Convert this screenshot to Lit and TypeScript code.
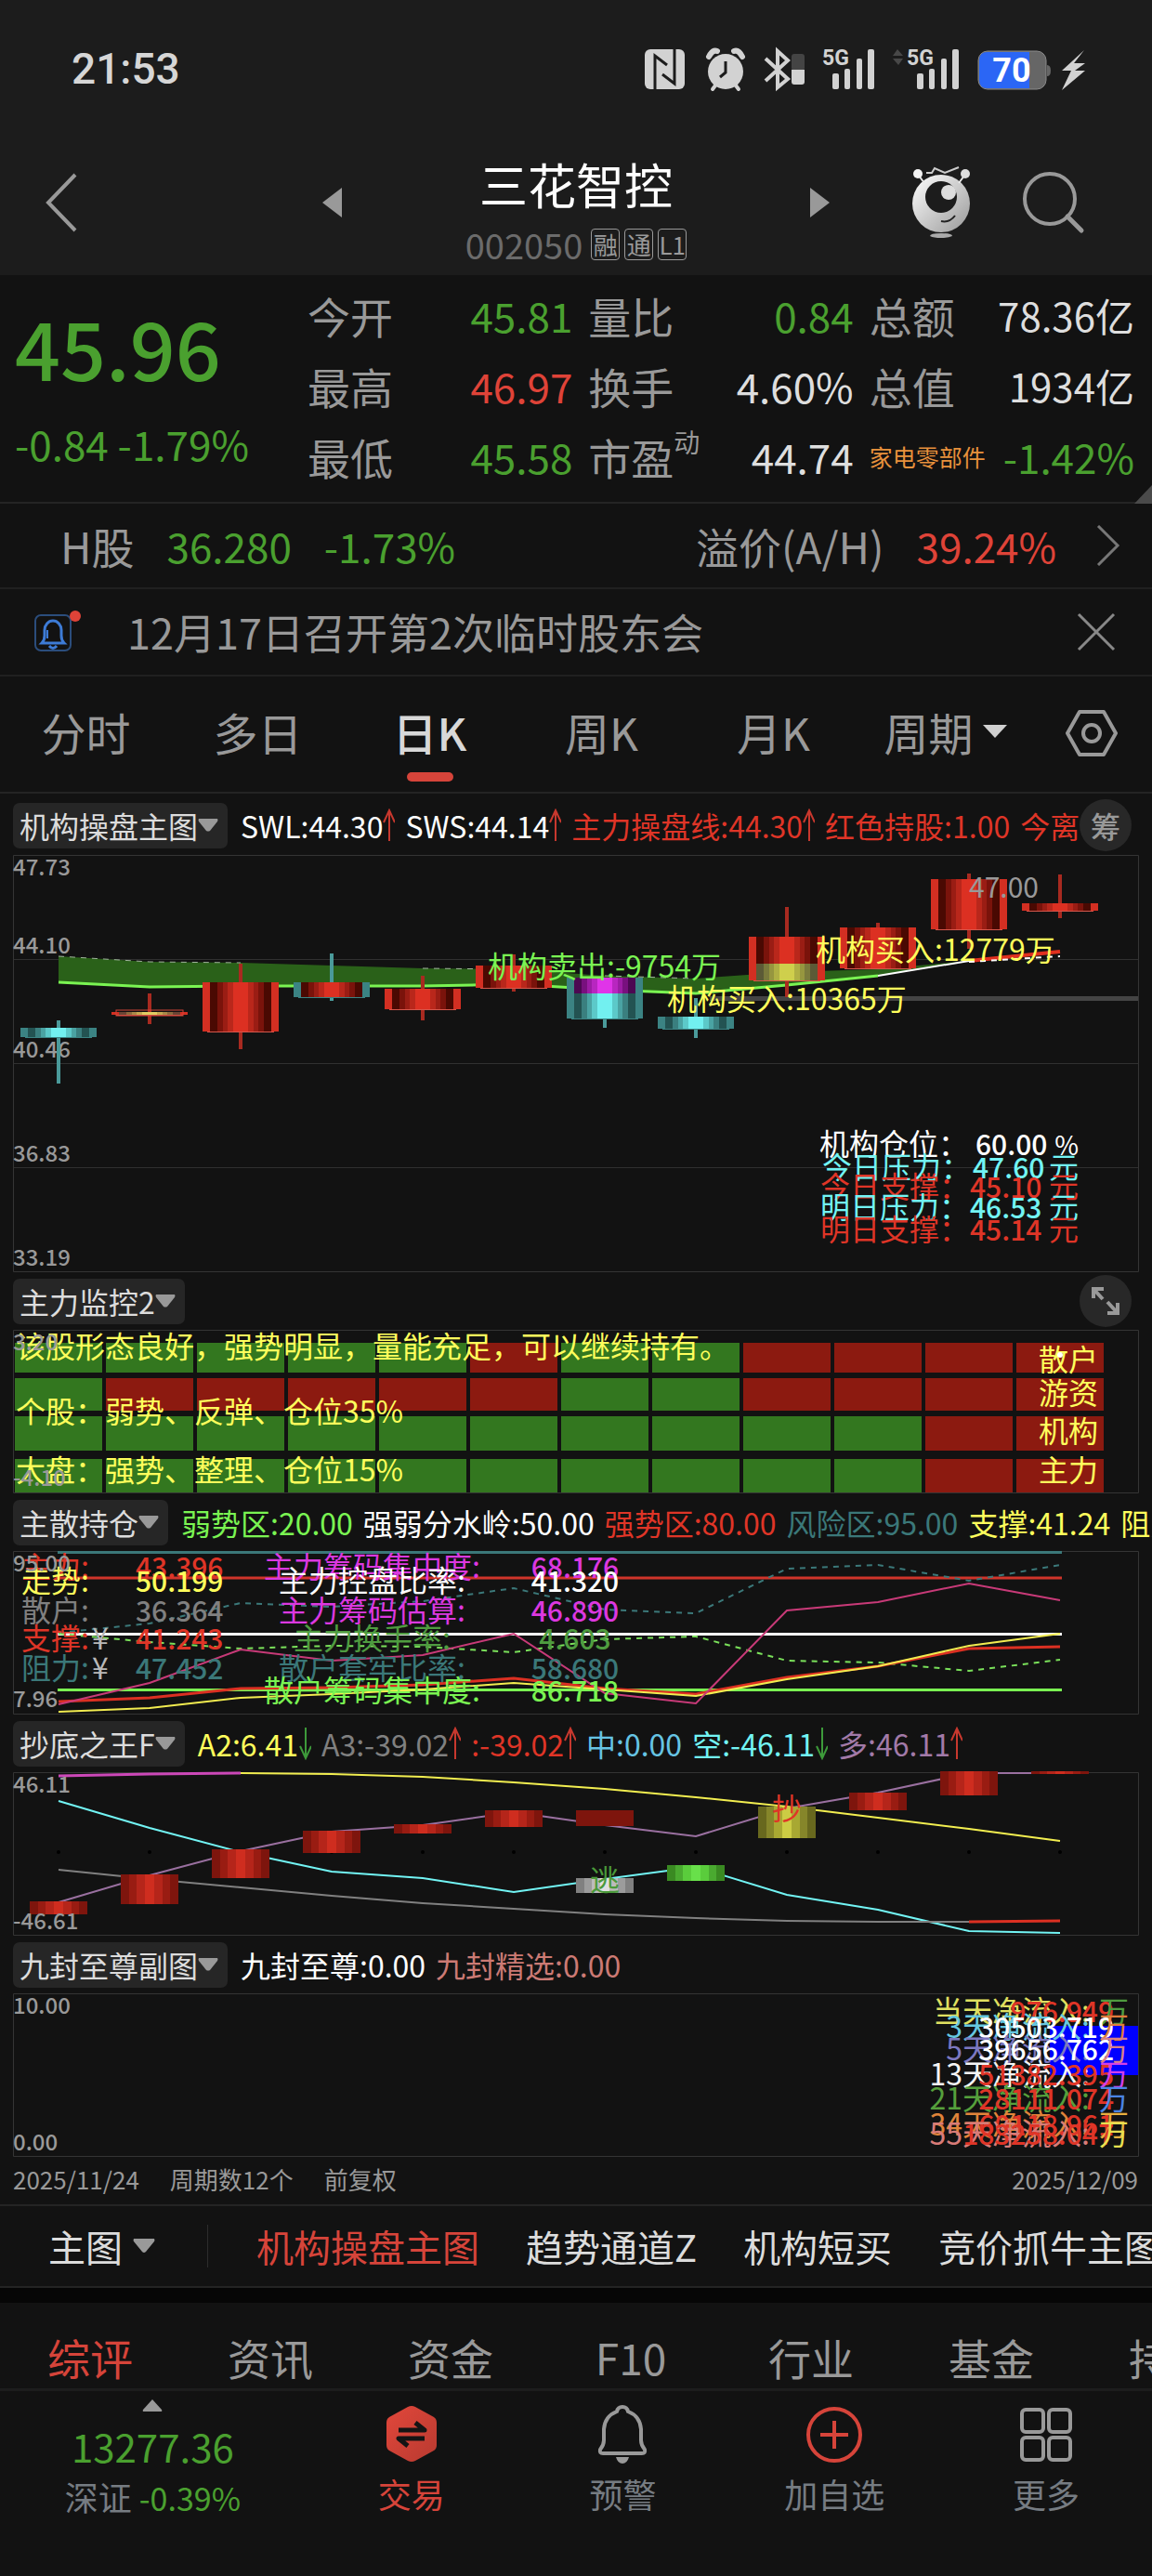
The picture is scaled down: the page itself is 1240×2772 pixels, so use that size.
import { LitElement, html, svg, css, nothing } from "lit";
import { customElement, property } from "lit/decorators.js";
import { classMap } from "lit/directives/class-map.js";

const base = css`
  :host { display: block; }
  * { box-sizing: border-box; }
  button, a {
    font: inherit; color: inherit; background: none; border: 0;
    padding: 0; margin: 0; text-decoration: none; cursor: pointer;
  }
  svg { display: block; flex: none; }
  .up { color: #df4338; }
  .down { color: #4aa02f; }
  .plain { color: #dedede; }
`;

/* ---------- status bar ---------- */

const signal = (x: number) => svg`
  <text x=${x} y="29" font-size="23" font-weight="700" fill="#d2d2d2">5G</text>
  <g fill="#d2d2d2">
    <rect x=${x + 11} y="38" width="7" height="17" rx="2"/>
    <rect x=${x + 24} y="33" width="6" height="22" rx="2"/>
    <rect x=${x + 37} y="22" width="6" height="33" rx="2"/>
    <rect x=${x + 49} y="12" width="7" height="43" rx="2"/>
  </g>`;

@customElement("status-bar")
export class StatusBar extends LitElement {
  static styles = [base, css`
    .bar { display: flex; justify-content: space-between; align-items: flex-start; height: 150px; padding: 41px 68px 0 77px; }
    .time { font: 500 46px/66px Roboto, sans-serif; color: #d6d6d6; }
    .icons { font-family: Roboto, sans-serif; }
  `];
  render() {
    return html`<div class="bar">
      <span class="time">21:53</span>
      <svg class="icons" width="480" height="64" viewBox="0 0 480 64" aria-label="状态">
        <rect x="2" y="12" width="43" height="43" rx="6" fill="#d2d2d2"/>
        <path d="M13 55V19L26 29M34 12v37L21 39" fill="none" stroke="#1c1c1c" stroke-width="3"/>
        <circle cx="89" cy="36" r="19" fill="#d2d2d2"/>
        <path d="M71 20q4-8 9-6M107 20q-4-8-9-6" fill="none" stroke="#d2d2d2" stroke-width="6" stroke-linecap="round"/>
        <path d="M78 51l-3 4M100 51l3 4" stroke="#d2d2d2" stroke-width="4" stroke-linecap="round"/>
        <path d="M89 25v12l-6 5" fill="none" stroke="#1c1c1c" stroke-width="3"/>
        <path d="M132 22L156 44L145 53V14L156 24L132 46" fill="none" stroke="#d2d2d2" stroke-width="4"/>
        <rect x="160" y="17" width="14" height="18" rx="3" fill="#444"/>
        <path d="M160 34h14v13q0 3-3 3h-8q-3 0-3-3z" fill="#d2d2d2"/>
        ${signal(193)}
        <path d="M269 19l5-7 6 7zM269 22h11l-5 7z" fill="#484848"/>
        ${signal(284)}
        <rect x="361" y="14" width="73" height="41" rx="10" fill="#666" stroke="#8a8a8a"/>
        <path d="M371 15h45v39h-45q-9 0-9-9V24q0-9 9-9z" fill="#2b66f5"/>
        <path d="M435 29q4 0 4 6t-4 6z" fill="#666"/>
        <text x="397" y="47" font-size="36" font-weight="700" text-anchor="middle" fill="#fff">70</text>
        <path d="M475 13L451 35h10L451 56L476 35H465L476 27H464z" fill="#d2d2d2"/>
      </svg>
    </div>`;
  }
}

/* ---------- title bar ---------- */

@customElement("title-bar")
export class TitleBar extends LitElement {
  static styles = [base, css`
    .bar { display: grid; grid-template-columns: 1fr auto 1fr; height: 146px; padding: 16px 0 15px; }
    .side { display: flex; align-items: center; padding: 0 0 12px 49px; }
    .end { justify-content: flex-end; gap: 54px; padding: 0 72px 12px 0; }
    .middle { display: flex; align-items: center; gap: 132px; }
    .step { padding-bottom: 12px; }
    .name { text-align: center; }
    h1 { margin: 0 0 14px; font-size: 52px; line-height: 64px; font-weight: 400; color: #fff; }
    .code { display: flex; align-items: center; justify-content: center; gap: 5px; height: 37px; font-size: 38px; line-height: 37px; color: #6b6b6b; }
    .number { margin-right: 4px; }
    .tag { width: 31px; height: 34px; border: 1px solid #999; border-radius: 4px; font-size: 26px; line-height: 31px; color: #999; text-align: center; }
  `];
  render() {
    return html`<header class="bar">
      <div class="side">
        <button aria-label="返回"><svg width="34" height="64" viewBox="0 0 34 64"><path d="M32 2L3 32L32 62" fill="none" stroke="#999" stroke-width="4"/></svg></button>
      </div>
      <div class="middle">
        <button class="step" aria-label="上一只"><svg width="22" height="32" viewBox="0 0 22 32"><path d="M21 0V32L0 16z" fill="#999"/></svg></button>
        <div class="name">
          <h1>三花智控</h1>
          <div class="code"><span class="number">002050</span><span class="tag">融</span><span class="tag">通</span><span class="tag">L1</span></div>
        </div>
        <button class="step" aria-label="下一只"><svg width="22" height="32" viewBox="0 0 22 32"><path d="M1 0V32L22 16z" fill="#999"/></svg></button>
      </div>
      <div class="side end">
        <button aria-label="助手"><svg width="66" height="80" viewBox="980 177 66 80">
          <defs><linearGradient id="g" x1="0" y1="0" x2="1" y2="1"><stop offset="0" stop-color="#fff"/><stop offset="1" stop-color="#999"/></linearGradient></defs>
          <circle cx="1013" cy="218" r="31" fill="url(#g)"/>
          <circle cx="1013" cy="211" r="17" fill="#1c1c1c"/>
          <circle cx="1021" cy="206" r="8" fill="#ddd"/>
          <path d="M1013 237q9 2 15-6" fill="none" stroke="#222" stroke-width="2"/>
          <path d="M989 188l6 8M1038 188l-6 8" stroke="#e8e8e8" stroke-width="2"/>
          <circle cx="988" cy="186" r="5" fill="#f4f4f4"/><circle cx="1039" cy="186" r="5" fill="#ddd"/>
          <path d="M997 185h6l3-5 11 5 15-6" fill="none" stroke="#ccc" stroke-width="2"/>
          <path d="M1001 253q0-3 12-3t12 3q-4 2-12 2t-12-2z" fill="#aaa"/>
        </svg></button>
        <button aria-label="搜索"><svg width="68" height="72" viewBox="1101 181 68 72"><circle cx="1131" cy="213" r="27" fill="none" stroke="#999" stroke-width="4"/><path d="M1150 232L1165 247" stroke="#999" stroke-width="5" stroke-linecap="round"/></svg></button>
      </div>
    </header>`;
  }
}

/* ---------- quote ---------- */

type Cell = { label: string; value: string; tone: string; sup?: string; sector?: boolean };
const cells: Cell[] = [
  { label: "今开", value: "45.81", tone: "down" },
  { label: "量比", value: "0.84", tone: "down" },
  { label: "总额", value: "78.36亿", tone: "plain" },
  { label: "最高", value: "46.97", tone: "up" },
  { label: "换手", value: "4.60%", tone: "plain" },
  { label: "总值", value: "1934亿", tone: "plain" },
  { label: "最低", value: "45.58", tone: "down" },
  { label: "市盈", value: "44.74", tone: "plain", sup: "动" },
  { label: "家电零部件", value: "-1.42%", tone: "down", sector: true },
];

@customElement("quote-panel")
export class QuotePanel extends LitElement {
  static styles = [base, css`
    .quote { position: relative; display: flex; padding: 5px 19px 11px 16px; border-bottom: 2px solid #242424; }
    .corner { position: absolute; right: 0; bottom: -2px; }
    .last { flex: none; width: 315px; }
    .price { font-size: 86px; line-height: 112px; font-weight: 500; padding-top: 16px; }
    .change { font-size: 44px; line-height: 60px; padding-top: 18px; white-space: pre; }
    .cells { flex: 1; display: grid; grid-template-columns: repeat(3, 1fr); grid-auto-rows: 76px; column-gap: 17px; margin: 0; }
    .cell { display: flex; justify-content: space-between; align-items: center; min-width: 0; }
    dt { display: flex; font-size: 46px; line-height: 60px; color: #999; white-space: nowrap; }
    sup { font-size: 28px; line-height: 28px; align-self: flex-start; margin: 0; }
    dt.sector { font-size: 25px; color: #e8913c; }
    dd { margin: 0; font-size: 44px; line-height: 60px; white-space: nowrap; }
    dd.light { font-size: 42px; }
    .row { display: flex; align-items: center; font-size: 44px; line-height: 60px; border-bottom: 2px solid #202020; }
    .hk { height: 92px; padding: 0 34px 0 65px; gap: 35px; color: #999; }
    .title { font-size: 46px; }
    .push { margin-left: auto; }
    .hk svg { margin-left: 8px; }
    .notice { height: 94px; padding: 0 39px 0 36px; color: #999; font-size: 45px; }
    .notice a { margin-left: 49px; flex: 1; }
  `];
  render() {
    return html`
      <section class="quote">
        <div class="last down">
          <div class="price">45.96</div>
          <div class="change">-0.84 -1.79%</div>
        </div>
        <dl class="cells">
          ${cells.map((c) => html`<div class="cell">
            <dt class=${classMap({ sector: !!c.sector })}>${c.label}${c.sup ? html`<sup>${c.sup}</sup>` : nothing}</dt>
            <dd class=${classMap({ [c.tone]: true, light: c.value.includes("亿") })}>${c.value}</dd>
          </div>`)}
        </dl>
        <svg class="corner" width="19" height="20" viewBox="0 0 19 20"><path d="M19 0V20H0z" fill="#4a4a4a"/></svg>
      </section>
      <section class="row hk">
        <span class="title">H股</span><span class="down">36.280</span><span class="down">-1.73%</span>
        <span class="title push">溢价(A/H)</span><span class="up">39.24%</span>
        <svg width="26" height="44" viewBox="0 0 26 44"><path d="M2 1L23 22L2 43" fill="none" stroke="#777" stroke-width="3"/></svg>
      </section>
      <section class="row notice">
        <svg width="52" height="46" viewBox="0 0 52 46">
          <rect x="2" y="5" width="38" height="38" rx="6" fill="none" stroke="#2b4d7c" stroke-width="2"/>
          <path d="M9 35q3-3 3-8v-6a9 10 0 0 1 18 0v6q0 5 3 8zM17 38q4 5 8 0" fill="none" stroke="#3d7bd6" stroke-width="3"/>
          <path d="M15 21v9" stroke="#3d7bd6" stroke-width="2"/>
          <circle cx="45" cy="6" r="6" fill="#df4338"/>
        </svg>
        <a href="#notice">12月17日召开第2次临时股东会</a>
        <button aria-label="关闭"><svg width="42" height="42" viewBox="0 0 42 42"><path d="M2 2L40 40M40 2L2 40" stroke="#888" stroke-width="3"/></svg></button>
      </section>`;
  }
}

/* ---------- period tabs ---------- */

@customElement("period-tabs")
export class PeriodTabs extends LitElement {
  static styles = [base, css`
    nav { display: flex; height: 126px; border-bottom: 2px solid #242424; font-size: 48px; line-height: 60px; color: #999; }
    button { flex: 185 1 0; display: flex; justify-content: center; align-items: center; gap: 10px; position: relative; white-space: nowrap; padding-bottom: 6px; }
    .settings { flex-grow: 130; padding-bottom: 2px; }
    .on { color: #d8d8d8; font-weight: 500; }
    .on::after { content: ""; position: absolute; bottom: 11px; left: 50%; margin-left: -25px; width: 50px; height: 10px; border-radius: 5px; background: #d6443a; }
  `];
  render() {
    return html`<nav>
      ${["分时", "多日", "日K", "周K", "月K"].map((t) => html`<button class=${classMap({ on: t === "日K" })}>${t}</button>`)}
      <button>周期<svg width="26" height="14" viewBox="0 0 26 14"><path d="M0 0H26L13 14z" fill="#d0d0d0"/></svg></button>
      <button class="settings" aria-label="设置"><svg width="56" height="52" viewBox="0 0 56 52"><path d="M15 3H41L54 26L41 49H15L2 26z" fill="none" stroke="#999" stroke-width="4" stroke-linejoin="round"/><circle cx="28" cy="26" r="9" fill="none" stroke="#999" stroke-width="4"/></svg></button>
    </nav>`;
  }
}

/* ---------- indicator heading ---------- */

type Reading = { text: string; color: string; dir?: "up" | "down" };

@customElement("indicator-bar")
export class IndicatorBar extends LitElement {
  @property() name = "";
  @property({ attribute: false }) readings: Reading[] = [];
  @property() action = "";
  static styles = [base, css`
    .bar { display: flex; align-items: center; height: 62px; padding-left: 14px; font-size: 32px; line-height: 48px; white-space: nowrap; }
    .pick { display: flex; align-items: center; flex: none; height: 49px; padding: 0 10px 0 7px; border-radius: 7px; background: #262626; color: #dcdcdc; }
    .list { flex: 1; min-width: 0; overflow: hidden; display: flex; gap: 11px; padding-left: 14px; }
    .item { display: flex; align-items: center; flex: none; }
    .round { flex: none; display: grid; place-items: center; width: 56px; height: 56px; margin-right: 22px; border-radius: 50%; background: #282828; color: #999; font-weight: 500; }
  `];
  render() {
    return html`<div class="bar">
      <button class="pick">${this.name}<svg width="22" height="14" viewBox="0 0 22 14"><path d="M1 0H21Q22 1 21 3L13 13Q11 14 9 13L1 3Q0 1 1 0z" fill="#999"/></svg></button>
      <div class="list">${this.readings.map((r) => html`<span class="item" style="color:${r.color}">${r.text}${
        r.dir === "up" ? html`<svg width="13" height="36" viewBox="0 0 13 36"><path d="M7 35V2M1 15L7 2L13 15" fill="none" stroke="#c8382e" stroke-width="2"/></svg>`
        : r.dir === "down" ? html`<svg width="14" height="36" viewBox="0 0 14 36"><path d="M8 1V34M2 21L8 34L14 21" fill="none" stroke="#3d9a3a" stroke-width="2"/></svg>` : nothing
      }</span>`)}</div>
      ${this.action === "chips" ? html`<button class="round">筹</button>` : nothing}
      ${this.action === "expand" ? html`<button class="round" aria-label="全屏"><svg width="30" height="30" viewBox="0 0 30 30"><path d="M2 12V2H13M2 2L12 13M28 17V28H17M28 28L17 16" fill="none" stroke="#999" stroke-width="4"/></svg></button>` : nothing}
    </div>`;
  }
}

/* ---------- charts ---------- */

const colX = (i: number) => 63 + i * 98;
const path = (ys: number[], from = 0) => ys.map((y, i) => `${colX(from + i)},${y}`).join(" ");
const line = (ys: number[], color: string, w = 2, from = 0, dash = "") =>
  svg`<polyline points=${path(ys, from)} fill="none" stroke=${color} stroke-width=${w} stroke-dasharray=${dash || "none"}/>`;
const label = (x: number, y: number, t: string, color: string, size = 32, anchor = "start", weight = 400) =>
  svg`<text x=${x} y=${y} fill=${color} font-size=${size} text-anchor=${anchor} font-weight=${weight}>${t}</text>`;
const axis = (y: number, t: string) => label(14, y, t, "#999", 24, "start", 500);

const REDS = ["#4a0902", "#7a130b", "#9a1d14", "#b9271b", "#dc3022"];
const CYANS = ["#235352", "#3a7f7f", "#4aa3a3", "#5cc9c9", "#72f0f0"];
const PURPLES = ["#4c0852", "#78107e", "#9c1ca4", "#b826c0", "#e034e8"];
const GOLDS = ["#5b5a36", "#7a7a3c", "#96963f", "#b0b044", "#cfcf4c"];
const SANDS = ["#6b4534", "#8c6a3e", "#a98a48", "#c4a852", "#e0cc62"];
const STEPS = [33, 25, 19, 14, 8];
const stripes = (cx: number, y1: number, y2: number, colors: string[], steps = STEPS) =>
  colors.map((c, i) => svg`<rect x=${cx - steps[i]} y=${y1} width=${steps[i] * 2} height=${y2 - y1} fill=${c} shape-rendering="crispEdges"/>`);

type Candle = { top: number; bottom: number; high: number; low: number; edge: string; fill: string[] };
const RED = "#d32f22", TEAL = "#3b8383";
const candles: Candle[] = [
  { top: 1106, bottom: 1116, high: 1098, low: 1166, edge: TEAL, fill: CYANS },
  { top: 1089, bottom: 1092, high: 1069, low: 1102, edge: RED, fill: SANDS },
  { top: 1057, bottom: 1110, high: 1037, low: 1129, edge: RED, fill: REDS },
  { top: 1057, bottom: 1073, high: 1026, low: 1077, edge: TEAL, fill: REDS },
  { top: 1064, bottom: 1086, high: 1050, low: 1098, edge: RED, fill: REDS },
  { top: 1039, bottom: 1063, high: 1027, low: 1067, edge: RED, fill: REDS },
  { top: 1052, bottom: 1096, high: 1052, low: 1106, edge: TEAL, fill: CYANS },
  { top: 1094, bottom: 1107, high: 1074, low: 1117, edge: TEAL, fill: CYANS },
  { top: 1008, bottom: 1055, high: 976, low: 1073, edge: RED, fill: REDS },
  { top: 998, bottom: 1042, high: 993, low: 1043, edge: RED, fill: REDS },
  { top: 946, bottom: 1000, high: 940, low: 1021, edge: RED, fill: REDS },
  { top: 972, bottom: 980, high: 941, low: 988, edge: RED, fill: REDS },
];
const candle = (c: Candle, i: number) => {
  const x = colX(i);
  return svg`
    <rect x=${x - 2} y=${c.high} width="4" height=${c.low - c.high} fill=${c.edge === RED ? "#a82a20" : "#4a9a9a"}/>
    <rect x=${x - 41} y=${c.top} width="82" height=${c.bottom - c.top} fill=${c.edge} shape-rendering="crispEdges"/>
    ${stripes(x, c.top, c.bottom, c.fill)}
    <rect x=${x - 36} y=${c.bottom} width="72" height="1" fill=${c.edge === RED ? "#d5574c" : "#3b8383"}/>`;
};

const bandTop = [1029, 1035, 1036, 1039, 1042, 1043, 1050, 1053, 1046, 1043, 1034];
const bandLow = [1057, 1062, 1061, 1061, 1061, 1059, 1065, 1069, 1060, 1050, 1034];
const LIME = "#7af452", YEL = "#ffff5c", AQUA = "#72f4f4", CRIMSON = "#df3527";

const priceChart = () => svg`
  ${[1032, 1144, 1256].map((y) => svg`<path d="M14 ${y}.5H1225" stroke="#303030" stroke-width="1"/>`)}
  <path d="M14.5 920.5H1225.5V1368.5H14.5z" fill="none" stroke="#343434"/>
  <rect x="764" y="1072" width="461" height="5" fill="#444"/>
  ${axis(942, "47.73")}${axis(1026, "44.10")}${axis(1138, "40.46")}${axis(1250, "36.83")}${axis(1362, "33.19")}
  <polygon points="${path(bandTop)} ${bandLow.map((y, i) => `${colX(i)},${y}`).reverse().join(" ")}" fill="#2a6119"/>
  ${line([1029, 1035, 1036], "#a0b49c", 1, 0, "6 6")}
  ${line([1042, 1043], "#a0b49c", 1, 4, "6 6")}
  ${line([1050, 1053], "#a0b49c", 1, 6, "6 6")}
  ${line(bandLow.slice(0, 10), LIME, 3)}
  ${line([1050, 1034], "#fff", 2, 9)}
  ${line([1034, 1024], "#e0301f", 4, 10)}
  ${line([1035, 1029], "#fff", 2, 10, "6 6")}
  ${candles.map(candle)}
  <rect x="125" y="1087" width="72" height="6" fill="none" stroke="#d04438" stroke-width="1"/>
  ${stripes(colX(6), 1052, 1069, PURPLES)}
  ${stripes(colX(8), 1037, 1055, GOLDS)}
  ${label(525, 1052, "机构卖出:-9754万", LIME)}
  ${label(718, 1087, "机构买入:10365万", YEL)}
  ${label(878, 1034, "机构买入:12779万", YEL)}
  ${label(1043, 966, "47.00", "#999", 30)}
  ${([
    [1243, "机构仓位：", "60.00", "%", "#fff", 882, 1050],
    [1268, "今日压力：", "47.60", "元", AQUA, 885, 1047],
    [1289, "今日支撑：", "45.10", "元", CRIMSON, 883, 1044],
    [1311, "明日压力：", "46.53", "元", AQUA, 883, 1044],
    [1335, "明日支撑：", "45.14", "元", CRIMSON, 883, 1044],
  ] as [number, string, string, string, string, number, number][]).map(([y, a, b, c, color, x1, x2]) => svg`
    ${label(x1, y, a, color)}${label(x2, y, b, color, 30, "start", 500)}${label(1161, y, c, color, c === "%" ? 28 : 32, "end")}`)}
`;

const heatRows: [number, number, string][] = [
  [1445, 1477, "gggggrggrrrr"],
  [1483, 1518, "grrrrrggrrrr"],
  [1524, 1561, "ggggggggggrr"],
  [1570, 1606, "ggggggggggrr"],
];
const heatChart = () => svg`
  <path d="M14.5 1431.5H1225.5V1606.5H14.5z" fill="none" stroke="#343434"/>
  ${heatRows.map(([y1, y2, s]) => [...s].map((c, i) => svg`<rect x=${colX(i) - 47} y=${y1} width="94" height=${y2 - y1} fill=${c === "g" ? "#33771f" : "#8c1a10"}/>`))}
  ${label(17, 1461, "该股形态良好，强势明显，量能充足，可以继续持有。", YEL)}
  ${label(17, 1531, "个股：弱势、反弹、仓位35%", YEL)}
  ${label(17, 1594, "大盘：强势、整理、仓位15%", YEL)}
  ${label(1118, 1475, "散户", YEL)}${label(1118, 1511, "游资", YEL)}${label(1118, 1552, "机构", YEL)}${label(1118, 1594, "主力", YEL)}
  <circle cx="1141" cy="1458" r="3" fill="#fff"/>
  ${axis(1453, "3.20")}${axis(1599, "-4.10")}
`;

const DTEAL = "#3b7879", MAG = "#dc38e0", GREEN = "#4f9c40";
const holdChart = () => svg`
  <path d="M14.5 1669.5H1225.5V1844.5H14.5z" fill="none" stroke="#343434"/>
  <path d="M62 1670.5H1143" stroke=${DTEAL} stroke-width="3"/>
  <path d="M62 1698H1143" stroke="#d0342a" stroke-width="3"/>
  <path d="M62 1758.5H1143" stroke="#fff" stroke-width="3"/>
  <path d="M62 1818.5H1143" stroke=${LIME} stroke-width="3"/>
  ${line([1757, 1747, 1725, 1729, 1723, 1709, 1732, 1736, 1688, 1684, 1701, 1684], DTEAL, 2, 0, "6 6")}
  ${line([1758, 1767, 1774, 1771, 1772, 1778, 1764, 1761, 1787, 1789, 1798, 1786], "#7ae05a", 2, 0, "6 6")}
  ${line([1831, 1827, 1817, 1816, 1813, 1806, 1817, 1823, 1805, 1793, 1774, 1772], "#dc3022", 3)}
  ${line([1842, 1838, 1827, 1823, 1818, 1811, 1818, 1825, 1807, 1793, 1771, 1758], "#f2ec50", 2)}
  ${line([1834, 1811, 1775, 1787, 1781, 1758, 1822, 1833, 1733, 1724, 1704, 1722], "#c83a78", 2)}
  ${([
    [1698, "主力:", "43.396", CRIMSON, 284, "主力筹码集中度:", "68.176", MAG],
    [1713, "走势:", "50.199", YEL, 300, "主力控盘比率:", "41.320", "#fff"],
    [1745, "散户:", "36.364", "#808080", 300, "主力筹码估算:", "46.890", MAG],
    [1775, "支撑:", "41.243", CRIMSON, 316, "主力换手率:", "4.603", GREEN],
    [1807, "阻力:", "47.452", DTEAL, 300, "散户套牢比率:", "58.680", DTEAL],
    [1831, "", "", LIME, 284, "散户筹码集中度:", "86.718", LIME],
  ] as [number, string, string, string, number, string, string, string][]).map(([y, a, b, c1, x, d, e, c2]) => svg`
    ${a ? svg`${label(23, y, a, c1)}${label(146, y, b, c1, 30, "start", 500)}` : nothing}${label(x, y, d, c2)}${label(619, y, e, c2, 30, "middle", 500)}`)}
  ${label(99, 1775, "¥", "#b8b8b8", 32)}${label(99, 1807, "¥", "#b8b8b8", 32)}
  ${axis(1691, "95.00")}${axis(1837, "7.96")}
`;

const BOX = [31, 22, 14, 5];
const BR = ["#7e150d", "#991c12", "#b5251a", "#cf2d1f"];
const boxes: [number, number, number, string[]][] = [
  [0, 2046, 2060, BR], [1, 2017, 2049, BR], [2, 1990, 2021, BR], [3, 1970, 1994, BR],
  [4, 1963, 1973, BR], [5, 1948, 1966, BR], [6, 1948, 1965, ["#7e150d"]],
  [6, 2021, 2037, ["#808080", "#9c9c9c", "#bcbcbc", "#e0e0e0"]],
  [7, 2007, 2024, ["#3a8a22", "#4aaa30", "#5acc3c", "#68e04a"]],
  [8, 1944, 1978, ["#68681e", "#86862a", "#a8a832", "#cccc44"]],
  [9, 1929, 1948, BR], [10, 1906, 1932, BR], [11, 1906, 1909, BR],
];
const bottomChart = () => svg`
  <path d="M14.5 1907.5H1225.5V2082.5H14.5z" fill="none" stroke="#343434"/>
  ${candles.map((_, i) => svg`<circle cx=${colX(i)} cy="1993" r="2" fill="#000"/>`)}
  ${line([1911, 1909, 1908], "#cc48b8", 3)}
  ${line([1908, 1909, 1912, 1918, 1925, 1934, 1944, 1956, 1968, 1981], "#f2ee50", 2, 2)}
  ${line([1938, 1967, 1993, 2014, 2021, 2036, 2022, 2009, 2039, 2055, 2078, 2080], AQUA, 2)}
  ${line([2012, 2022, 2031, 2040, 2048, 2054, 2060, 2064, 2067, 2068, 2068], "#808080", 2)}
  ${line([2068, 2067], "#dc3022", 3, 10)}
  ${line([2047, 2018, 1992, 1971, 1964, 1950, 1964, 1976, 1946, 1929, 1908, 1908], "#9a70a0", 2)}
  ${boxes.map(([i, a, b, c]) => stripes(colX(i), a, b, c, BOX))}
  ${label(847, 1958, "抄", CRIMSON, 32, "middle")}
  ${label(651, 2035, "逃", "#4a9a3a", 32, "middle")}
  ${axis(1929, "46.11")}${axis(2076, "-46.61")}
`;

const flows: [number, string, string, string, string, string][] = [
  [2176, "当天净流入:", "#e0e060", "976.949", CRIMSON, GREEN],
  [2193, "3天净流入:", "#66c8e0", "30503.719", "#fff", "#e07c3c"],
  [2217, "5天净流入:", "#7c78c0", "39656.762", "#fff", "#d88086"],
  [2244, "13天净流入:", "#f4f4f4", "51382.395", CRIMSON, "#d240e8"],
  [2270, "21天净流入:", "#56a03c", "28111.074", CRIMSON, "#4a84e4"],
  [2298, "34天净流入:", "#e0843a", "60118.961", CRIMSON, "#e8b040"],
  [2308, "55天净流入:", "#d87c78", "183258.047", CRIMSON, "#e8e050"],
];
const flowChart = () => svg`
  <path d="M14.5 2145.5H1225.5V2320.5H14.5z" fill="none" stroke="#343434"/>
  <rect x="1130" y="2180" width="95" height="53" fill="#0000ff"/>
  ${flows.map(([y, a, c1, b, c2, c3]) => svg`${label(1173, y, a, c1, 32, "end")}${label(1199, y, b, c2, 30, "end", 500)}${label(1183, y, "万", c3)}`)}
  ${axis(2167, "10.00")}${axis(2314, "0.00")}
`;

const W = "#ffffff";
const mainReadings: Reading[] = [
  { text: "SWL:44.30", color: W, dir: "up" },
  { text: "SWS:44.14", color: W, dir: "up" },
  { text: "主力操盘线:44.30", color: CRIMSON, dir: "up" },
  { text: "红色持股:1.00", color: CRIMSON },
  { text: "今离", color: CRIMSON },
];
const holdReadings: Reading[] = [
  { text: "弱势区:20.00", color: LIME },
  { text: "强弱分水岭:50.00", color: W },
  { text: "强势区:80.00", color: CRIMSON },
  { text: "风险区:95.00", color: DTEAL },
  { text: "支撑:41.24", color: YEL },
  { text: "阻力:47.45", color: YEL },
];
const bottomReadings: Reading[] = [
  { text: "A2:6.41", color: YEL, dir: "down" },
  { text: "A3:-39.02", color: "#808080", dir: "up" },
  { text: ":-39.02", color: CRIMSON, dir: "up" },
  { text: "中:0.00", color: "#66c4e4" },
  { text: "空:-46.11", color: AQUA, dir: "down" },
  { text: "多:46.11", color: "#a27aa8", dir: "up" },
];
const sealReadings: Reading[] = [
  { text: "九封至尊:0.00", color: W },
  { text: "九封精选:0.00", color: "#cc7a74" },
];

@customElement("chart-stack")
export class ChartStack extends LitElement {
  static styles = [base, css`
    .top { padding: 3px 0 1px; }
    .chart { width: 100%; height: auto; overflow: visible; }
    .dates { display: flex; align-items: center; gap: 33px; height: 51px; padding: 0 15px 4px 14px; font-size: 26px; line-height: 36px; color: #999; }
    .end { margin-left: auto; }
  `];
  render() {
    return html`
      <indicator-bar class="top" name="机构操盘主图" action="chips" .readings=${mainReadings}></indicator-bar>
      <svg class="chart" viewBox="0 920 1240 449">${priceChart()}</svg>
      <indicator-bar name="主力监控2" action="expand"></indicator-bar>
      <svg class="chart" viewBox="0 1431 1240 176">${heatChart()}</svg>
      <indicator-bar name="主散持仓" .readings=${holdReadings}></indicator-bar>
      <svg class="chart" viewBox="0 1669 1240 176">${holdChart()}</svg>
      <indicator-bar name="抄底之王F" .readings=${bottomReadings}></indicator-bar>
      <svg class="chart" viewBox="0 1907 1240 176">${bottomChart()}</svg>
      <indicator-bar name="九封至尊副图" .readings=${sealReadings}></indicator-bar>
      <svg class="chart" viewBox="0 2145 1240 176">${flowChart()}</svg>
      <div class="dates"><span>2025/11/24</span><span>周期数12个</span><span>前复权</span><span class="end">2025/12/09</span></div>`;
  }
}

/* ---------- bottom area ---------- */

@customElement("bottom-area")
export class BottomArea extends LitElement {
  static styles = [base, css`
    nav { display: flex; overflow: hidden; white-space: nowrap; }
    nav button { flex: none; }
    .picks { align-items: center; height: 90px; border: solid #242424; border-width: 2px 0; font-size: 40px; line-height: 56px; color: #dcdcdc; padding-left: 52px; }
    .kind { display: flex; align-items: center; gap: 11px; padding-right: 56px; }
    .list { display: flex; gap: 50px; padding-left: 52px; border-left: 1px solid #2c2c2c; height: 46px; align-items: center; }
    .picks .on, .tabs .on { color: #d6443a; }
    .band { height: 16px; background: #060606; }
    .tabs { height: 95px; padding-top: 24px; border-bottom: 3px solid #1d1d1d; font-size: 46px; line-height: 68px; color: #999; }
    .tabs button { width: 194px; }
    .dock { height: 199px; align-items: flex-start; font-size: 36px; line-height: 48px; color: #767c82; }
    .dock button { flex: 228 1 0; min-width: 0; display: flex; flex-direction: column; align-items: center; padding-top: 14px; gap: 8px; }
    .dock .index { flex-grow: 329; padding-top: 9px; gap: 0; }
    .value { font-size: 42px; line-height: 56px; padding-top: 8px; }
    .market { padding-top: 2px; }
    .market .down { font-size: 34px; }
    .dock .trade { color: #d6443a; }
  `];
  render() {
    return html`
      <nav class="picks">
        <button class="kind">主图<svg width="24" height="16" viewBox="0 0 24 16"><path d="M1 0H23Q24 2 23 3L14 14Q12 16 10 14L1 3Q0 2 1 0z" fill="#999"/></svg></button>
        <div class="list"><button class="on">机构操盘主图</button><button>趋势通道Z</button><button>机构短买</button><button>竞价抓牛主图</button></div>
      </nav>
      <div class="band"></div>
      <nav class="tabs">
        ${["综评", "资讯", "资金", "F10", "行业", "基金", "持仓"].map((t, i) => html`<button class=${classMap({ on: i === 0 })}>${t}</button>`)}
      </nav>
      <nav class="dock">
        <button class="index">
          <svg width="22" height="14" viewBox="0 0 22 14"><path d="M11 0L21 11Q22 13 20 13H2Q0 13 1 11z" fill="#999"/></svg>
          <span class="value down">13277.36</span>
          <span class="market">深证 <span class="down">-0.39%</span></span>
        </button>
        <button class="trade">
          <svg width="58" height="64" viewBox="0 0 58 64"><defs><linearGradient id="t" x1="0" y1="0" x2="1" y2="1"><stop offset="0" stop-color="#e2473b"/><stop offset="1" stop-color="#b83a30"/></linearGradient></defs>
            <path d="M25 3Q29 1 33 3L53 14Q56 16 56 20V44Q56 48 53 50L33 61Q29 63 25 61L5 50Q2 48 2 44V20Q2 16 5 14z" fill="url(#t)"/>
            <path d="M15 28H43L33 20M43 37H15L25 45" fill="none" stroke="#141414" stroke-width="5" stroke-linejoin="round"/></svg>交易</button>
        <button><svg width="54" height="64" viewBox="0 0 54 64"><path d="M27 3q5 0 6 5q13 5 14 19v12q0 5 4 10q1 4-3 4H6q-4 0-3-4q4-5 4-10V27q1-14 14-19q1-5 6-5z" fill="none" stroke="#999" stroke-width="4" stroke-linejoin="round"/><path d="M20 57h14q-2 7-7 7t-7-7z" fill="#999"/></svg>预警</button>
        <button><svg width="62" height="64" viewBox="0 0 62 64"><circle cx="31" cy="33" r="28" fill="none" stroke="#d6443a" stroke-width="4"/><path d="M31 18V48M16 33H46" stroke="#d6443a" stroke-width="4"/></svg>加自选</button>
        <button><svg width="58" height="64" viewBox="0 0 58 64"><g fill="none" stroke="#999" stroke-width="4"><rect x="3" y="6" width="23" height="24" rx="4"/><rect x="32" y="6" width="23" height="24" rx="4"/><rect x="3" y="36" width="23" height="24" rx="4"/><rect x="32" y="36" width="23" height="24" rx="4"/></g></svg>更多</button>
      </nav>`;
  }
}

@customElement("app-root")
export class AppRoot extends LitElement {
  static styles = [base, css`
    :host { background: #121212; min-height: 100vh; overflow: hidden; font-family: "Noto Sans CJK SC", "Noto Sans", sans-serif; }
    .head { background: #1c1c1c; }
  `];
  render() {
    return html`
      <div class="head"><status-bar></status-bar><title-bar></title-bar></div>
      <quote-panel></quote-panel>
      <period-tabs></period-tabs>
      <chart-stack></chart-stack>
      <bottom-area></bottom-area>`;
  }
}
